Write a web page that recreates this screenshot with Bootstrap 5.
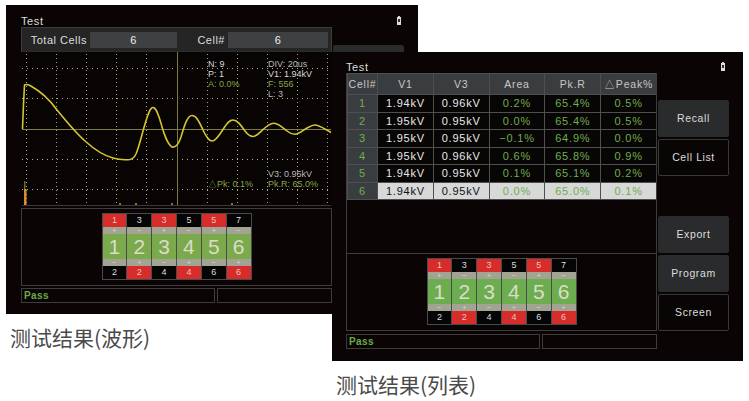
<!DOCTYPE html>
<html lang="zh">
<head>
<meta charset="utf-8">
<title>测试结果</title>
<link href="https://cdn.jsdelivr.net/npm/bootstrap@5.3.0/dist/css/bootstrap.min.css" rel="stylesheet">
<style>
html,body{background:#fff;margin:0;height:401px;overflow:hidden}
body{position:relative;width:749px;font-family:"Liberation Sans",Arial,sans-serif}
.shot{position:absolute}
.shot-a{left:6px;top:5px;width:412px}
.shot-b{left:332px;top:52px;width:411px}
.screen{position:relative;background:#0a0504;height:309px;color:#ddd;font-size:11px;line-height:12px}
.screen-a{padding:10px 0 0 15px}
.screen-b{padding:9px 0 0 14px;gap:1px}
.cap{font-family:"Noto Sans CJK SC",sans-serif;font-size:21px;line-height:28px;color:#4a4a4a;margin:9px 0 0 4px;white-space:nowrap}
.title{height:12px;letter-spacing:.6px;color:#ddd;font-size:11px;line-height:12px}
.batt{position:absolute;display:block}
.batt-a{left:390px;top:11px}
.batt-b{left:388px;top:10px}
.peek{position:absolute;left:327px;top:40px;width:71px;height:7px;background:#2a2b2c;border-radius:2px 2px 0 0}
.main{width:311px}
.head{height:25px;background:#252525;border:1px solid #3c3c3c;border-bottom-color:#2c2c2c;width:311px;letter-spacing:.5px;color:#ddd}
.lab1{width:65px}.lab2{width:48px}
.val1,.val2{height:16px;background:#3e4042;margin-left:3px;text-align:center;line-height:16px;color:#eee}
.val1{width:87px}.val2{width:100px}
.scope{display:block;width:311px;height:155px}
.grid-h{stroke:#b7b27c;stroke-width:1;stroke-dasharray:1 4}
.grid-v{stroke:#d8d8c8;stroke-width:1;stroke-dasharray:1 14}
.grid-w{stroke:#a9a56e;stroke-width:1;stroke-dasharray:1 3}
.axis{stroke:#7c7a45;stroke-width:1}
.wave{fill:none;stroke:#d4c62f;stroke-width:1.6;stroke-linejoin:round}
.rd{font-family:"Liberation Sans",Arial,sans-serif;font-size:9px;fill:#b8b8b8}
.rdw{fill:#d8d8d8}
.rdg{fill:#8aa548}
.frame{height:78px;border:1px solid #3d3d3d;padding-top:4px}
.frame-a{margin-top:1px}
.pack{display:grid;grid-template-columns:repeat(6,1fr);grid-template-rows:13px 7px 25px 7px 13px;width:150px;height:67px;background:#4b4b4b;border:1px solid #4b4b4b;gap:0 1px;margin:0 auto;text-align:center;font-size:9px;line-height:13px}
.pack>div{overflow:hidden}
.t{background:#050505;color:#ddd}
.r{background:#d62c2a;color:#eec5bd}
.s{background:#a3a393;color:#d4d4ca;line-height:7px;font-size:8px}
.g{background:#7aaa4b;color:#dcdcc8;font-size:21px;line-height:25px}
.pack-b .g{background:#6cad50}
.stat{height:15px;margin-top:2px;gap:2px}
.stat-b{margin-top:3px}
.sbox{border:1px solid #3d3d3d;height:15px;color:#6cab45;font-size:10px;line-height:13px;font-weight:700;padding-left:2px;letter-spacing:.4px}
.sbox1{width:194px}.sbox2{width:115px}
.tbwrap{height:180px;border:1px solid #3d3d3d;border-top:0;border-bottom:0;width:311px;overflow:hidden}
.table.scr{--bs-table-bg:transparent;--bs-table-color:#eee;--bs-table-border-color:#4d4f50;width:310px;table-layout:fixed;margin:0;font-size:11px;letter-spacing:.8px;line-height:12px;border-collapse:collapse}
.table.scr th,.table.scr td{padding:0;text-align:center;vertical-align:middle;border:1px solid #4d4f50;font-weight:400;height:17.5px;background:#080505;color:#e8e8e8;box-shadow:none}
.table.scr thead th{height:21px;background:#3a3d3f;color:#c8c8c8;font-size:10.5px}
.table.scr tbody th{background:#3a3d3f;color:#70ad50}
.table.scr td.ok{color:#6fad52}
.table.scr tr.sel td{background:#d8d8d8;color:#111}
.table.scr tr.sel td.ok{color:#6fad52}
.c0{width:30px}
.side{width:71px;padding-top:39px;gap:2px}
.soft{display:flex;align-items:center;justify-content:center;width:71px;height:37px;padding:0;border-radius:2px;font-size:10.5px;letter-spacing:.6px;color:#ddd;background:#2a2b2c;border:1px solid #2a2b2c}
.soft:hover{color:#ddd;background:#2a2b2c}
.soft.line{background:#0a0505;border-color:#37393a}
.gapb{margin-top:38px}
</style>
</head>
<body>

<div class="shot shot-a">
  <div class="screen screen-a">
    <div class="title">Test</div>
    <svg class="batt batt-a" width="6" height="9" viewBox="0 0 6 9" aria-hidden="true"><rect x="2" y="0" width="2" height="1" fill="#ccc"/><rect x="1" y="1" width="4" height="8" fill="#ddd"/><rect x="2" y="3" width="2" height="3" fill="#333"/></svg>
    <div class="peek"></div>
    <div class="main">
      <div class="head d-flex align-items-center">
        <span class="lab1 text-end">Total Cells</span><span class="val1">6</span>
        <span class="lab2 text-end">Cell#</span><span class="val2">6</span>
      </div>
      <svg class="scope" viewBox="21 52 311 155">
        <rect x="21" y="52" width="311" height="155" fill="#070403"/>
        <g class="grid-h">
          <line x1="22" y1="68.5" x2="331" y2="68.5"/><line x1="22" y1="98.5" x2="331" y2="98.5"/>
          <line x1="22" y1="159.5" x2="331" y2="159.5"/><line x1="22" y1="189.5" x2="331" y2="189.5"/>
        </g>
        <g class="grid-w">
          <line x1="26.5" y1="54" x2="26.5" y2="206"/><line x1="56.5" y1="54" x2="56.5" y2="206"/>
          <line x1="86.5" y1="54" x2="86.5" y2="206"/><line x1="116.5" y1="54" x2="116.5" y2="206"/>
          <line x1="146.5" y1="54" x2="146.5" y2="206"/><line x1="207.5" y1="54" x2="207.5" y2="206"/>
          <line x1="237.5" y1="54" x2="237.5" y2="206"/><line x1="267.5" y1="54" x2="267.5" y2="206"/>
          <line x1="297.5" y1="54" x2="297.5" y2="206"/><line x1="327.5" y1="54" x2="327.5" y2="206"/>
        </g>
        <line class="axis" x1="22" y1="129.5" x2="331" y2="129.5"/>
        <line class="axis" x1="177.5" y1="52" x2="177.5" y2="205"/>
        <line x1="22" y1="205.5" x2="331" y2="205.5" stroke="#3a3a3a"/>
        <path class="wave" d="M22.5 129 L23.5 104 L24.5 85 C26 84 28 84.500 30 85.500 C40 91 50 100 57 110 C66 121 76 133 85 141 C95 150 105 156 113 158 C118 159.500 125 160 130 159.500 C133 159 134.500 157 136 154 C139 147 142 134 145 124 C148 114 150 107.500 153 107.500 C156 107.500 158 114 160 120 C163 130 166 143 172 147 C176 148 179 143 181 137 C184 127 187 115.500 192 115.500 C197 115.500 200 124 204 132 C207 138 209 141 212.500 141 C216 141 220 134 224 128 C227 123.500 229 120 233 120 C237 120 240 124 245 131 C248 135 250 136.500 253 136.500 C257 136.500 261 131 266 127 C269 124.500 271 123.300 274 123.300 C278 123.300 282 127 287 131 C290 133.500 292 134.300 295 134.300 C299 134.300 303 130 308 127.500 C311 125.800 313 125 315 125 C319 125 323 128 331 132.500"/>
        <rect x="24" y="181" width="1.500" height="9" fill="#6e6a2e"/>
        <rect x="24" y="189" width="2.500" height="16" fill="#e08a26"/>
        <g fill="#8c7322">
          <rect x="119" y="203" width="2" height="2"/><rect x="135" y="203" width="2" height="2"/>
          <rect x="171" y="203" width="2" height="2"/><rect x="231" y="203" width="2" height="2"/>
        </g>
        <text class="rd rdw" x="208" y="67">N: 9</text>
        <text class="rd rdw" x="208" y="77">P: 1</text>
        <text class="rd rdg" x="208" y="87">A: 0.0%</text>
        <text class="rd" x="268" y="67">DIV: 20us</text>
        <text class="rd rdw" x="268" y="77">V1: 1.94kV</text>
        <text class="rd rdg" x="268" y="87">F: 556</text>
        <text class="rd" x="268" y="97">L: 3</text>
        <text class="rd" x="268" y="177">V3: 0.95kV</text>
        <text class="rd rdg" x="208" y="187">△Pk: 0.1%</text>
        <text class="rd rdg" x="268" y="187">Pk.R: 65.0%</text>
      </svg>
      <div class="frame frame-a">
        <div class="pack">
          <div class="r">1</div><div class="t">3</div><div class="r">3</div><div class="t">5</div><div class="r">5</div><div class="t">7</div>
          <div class="s">+</div><div class="s">−</div><div class="s">+</div><div class="s">−</div><div class="s">+</div><div class="s">−</div>
          <div class="g">1</div><div class="g">2</div><div class="g">3</div><div class="g">4</div><div class="g">5</div><div class="g">6</div>
          <div class="s">−</div><div class="s">+</div><div class="s">−</div><div class="s">+</div><div class="s">−</div><div class="s">+</div>
          <div class="t">2</div><div class="r">2</div><div class="t">4</div><div class="r">4</div><div class="t">6</div><div class="r">6</div>
        </div>
      </div>
      <div class="stat d-flex">
        <div class="sbox sbox1">Pass</div><div class="sbox sbox2"></div>
      </div>
    </div>
  </div>
  <p class="cap">测试结果(波形)</p>
</div>

<div class="shot shot-b">
  <div class="screen screen-b d-flex">
    <svg class="batt batt-b" width="6" height="9" viewBox="0 0 6 9" aria-hidden="true"><rect x="2" y="0" width="2" height="1" fill="#ccc"/><rect x="1" y="1" width="4" height="8" fill="#ddd"/><rect x="2" y="3" width="2" height="3" fill="#333"/></svg>
    <div class="main">
      <div class="title">Test</div>
      <div class="tbwrap">
        <table class="table scr">
          <thead>
            <tr><th class="c0">Cell#</th><th>V1</th><th>V3</th><th>Area</th><th>Pk.R</th><th>△Peak%</th></tr>
          </thead>
          <tbody>
            <tr><th>1</th><td>1.94kV</td><td>0.96kV</td><td class="ok">0.2%</td><td class="ok">65.4%</td><td class="ok">0.5%</td></tr>
            <tr><th>2</th><td>1.95kV</td><td>0.95kV</td><td class="ok">0.0%</td><td class="ok">65.4%</td><td class="ok">0.5%</td></tr>
            <tr><th>3</th><td>1.95kV</td><td>0.95kV</td><td class="ok">−0.1%</td><td class="ok">64.9%</td><td class="ok">0.0%</td></tr>
            <tr><th>4</th><td>1.95kV</td><td>0.96kV</td><td class="ok">0.6%</td><td class="ok">65.8%</td><td class="ok">0.9%</td></tr>
            <tr><th>5</th><td>1.94kV</td><td>0.95kV</td><td class="ok">0.1%</td><td class="ok">65.1%</td><td class="ok">0.2%</td></tr>
            <tr class="sel"><th>6</th><td>1.94kV</td><td>0.95kV</td><td class="ok">0.0%</td><td class="ok">65.0%</td><td class="ok">0.1%</td></tr>
          </tbody>
        </table>
      </div>
      <div class="frame">
        <div class="pack pack-b">
          <div class="r">1</div><div class="t">3</div><div class="r">3</div><div class="t">5</div><div class="r">5</div><div class="t">7</div>
          <div class="s">+</div><div class="s">−</div><div class="s">+</div><div class="s">−</div><div class="s">+</div><div class="s">−</div>
          <div class="g">1</div><div class="g">2</div><div class="g">3</div><div class="g">4</div><div class="g">5</div><div class="g">6</div>
          <div class="s">−</div><div class="s">+</div><div class="s">−</div><div class="s">+</div><div class="s">−</div><div class="s">+</div>
          <div class="t">2</div><div class="r">2</div><div class="t">4</div><div class="r">4</div><div class="t">6</div><div class="r">6</div>
        </div>
      </div>
      <div class="stat stat-b d-flex">
        <div class="sbox sbox1">Pass</div><div class="sbox sbox2"></div>
      </div>
    </div>
    <div class="side d-flex flex-column">
      <button type="button" class="btn soft">Recall</button>
      <button type="button" class="btn soft line">Cell List</button>
      <button type="button" class="btn soft gapb">Export</button>
      <button type="button" class="btn soft">Program</button>
      <button type="button" class="btn soft line">Screen</button>
    </div>
  </div>
  <p class="cap">测试结果(列表)</p>
</div>

<script src="https://cdn.jsdelivr.net/npm/bootstrap@5.3.0/dist/js/bootstrap.bundle.min.js"></script>
</body>
</html>
